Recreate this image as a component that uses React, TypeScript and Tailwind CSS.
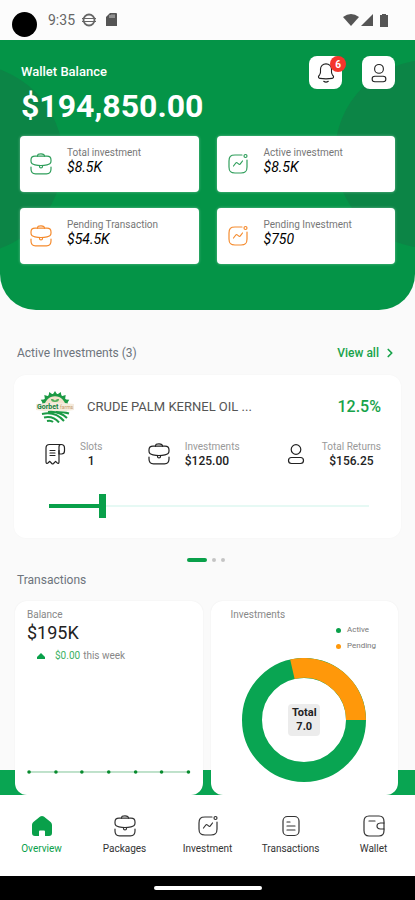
import type { ReactNode } from 'react';
import { ChevronRight } from 'lucide-react';

type IconProps = { className?: string };

function Stroke({ className = 'w-6 h-6', children }: IconProps & { children: ReactNode }) {
  return (
    <svg
      viewBox="0 0 24 24"
      className={`shrink-0 ${className}`}
      fill="none"
      stroke="currentColor"
      strokeWidth="1.2"
      strokeLinecap="round"
      strokeLinejoin="round"
      aria-hidden="true"
    >
      {children}
    </svg>
  );
}

const Briefcase = ({ className }: IconProps) => (
  <Stroke className={className}>
    <path d="M8.500 4.200C8.500 2.400 9.500 1.800 12 1.800s3.500.6 3.500 2.400" />
    <path d="M6 4.200h12c2.500 0 4 1.300 4 3.800v1c0 2.300-1.500 3.400-4 3.900-2 .4-4 .6-6 .6s-4-.2-6-.6C3.500 12.400 2 11.300 2 9V8c0-2.500 1.500-3.800 4-3.800z" />
    <path d="M10.500 14v.4a1.500 1.500 0 0 0 3 0V14" />
    <path d="M2 15v2c0 3.500 1.500 4.800 4.500 4.800h11c3 0 4.500-1.300 4.500-4.800v-2" />
  </Stroke>
);

const Growth = ({ className }: IconProps) => (
  <Stroke className={className}>
    <path d="M16 3H9C4.500 3 3 4.500 3 9v6c0 4.500 1.500 6 6 6h6c4.500 0 6-1.500 6-6V8" />
    <circle cx="19.500" cy="4" r="1.500" />
    <path d="m7.500 14 2.300-3c.4-.5 1-.5 1.500-.1l1.500 1.200c.5.4 1.100.3 1.500-.2l2.200-2.900" />
  </Stroke>
);

const Person = ({ className }: IconProps) => (
  <Stroke className={className}>
    <circle cx="12" cy="7.500" r="4.800" />
    <rect x="4.500" y="15.500" width="15" height="6" rx="3" />
  </Stroke>
);

const Bell = ({ className }: IconProps) => (
  <Stroke className={className}>
    <path d="M12 2c-3.500 0-6 2.700-6 6v3c0 1-.4 2-1 3l-1 1.400c-.6 1.100-.1 2.300 1.300 2.500 4.400.6 9 .6 13.400 0 1.400-.2 1.900-1.400 1.300-2.500L19 14c-.6-1-1-2-1-3V8c0-3.300-2.500-6-6-6z" />
    <path d="M9.500 21c1.500 1.200 3.500 1.200 5 0" />
  </Stroke>
);

const Slip = ({ className }: IconProps) => (
  <Stroke className={className}>
    <path d="M17 8.500V20c0 1.500-1 1.800-1.900.8l-1.500-1.500-2.100 2.200c-.5.500-1.200.5-1.700 0l-2-2.200-1.600 1.500C5.200 21.800 4 21.500 4 20V6c0-2.500 1-3.500 3.500-3.500H19" />
    <path d="M19 2.500c-1.300 0-2 1-2 2.500v7h2.500c2 0 3-1 3-3V6c0-2.200-1.300-3.500-3.500-3.500z" />
    <path d="M8 8.500h5M8 11h5M8 13.500h5" />
  </Stroke>
);

const Document = ({ className }: IconProps) => (
  <Stroke className={className}>
    <rect x="4" y="2.500" width="16" height="19" rx="4.500" />
    <path d="M8 8h3M8 12h8M8 16h8" />
  </Stroke>
);

const Wallet = ({ className }: IconProps) => (
  <Stroke className={className}>
    <path d="M22 9V7.500C22 3.500 20.500 2 17 2H7C3.500 2 2 3.500 2 7.500v9C2 20.500 3.500 22 7 22h10c3.500 0 5-1.500 5-5.500V15" />
    <path d="M22 9h-3.500c-2 .2-3.500 1.400-3.500 3s1.500 2.800 3.500 3H22z" />
    <path d="M7 7h6" />
  </Stroke>
);

const House = ({ className }: IconProps) => (
  <svg viewBox="0 0 24 24" className={className} fill="currentColor" aria-hidden="true">
    <path d="M10.200 2.600 3.700 7.700C2.600 8.600 2 9.800 2 11.200V19a3 3 0 0 0 3 3h4v-4.500a1 1 0 0 1 1-1h4a1 1 0 0 1 1 1V22h4a3 3 0 0 0 3-3v-7.800c0-1.400-.6-2.600-1.700-3.500l-6.500-5.100a3 3 0 0 0-3.600 0z" />
  </svg>
);

function FarmLogo() {
  const rays = [-84, -63, -42, -21, 0, 21, 42, 63, 84];
  return (
    <svg viewBox="0 0 38 32" className="w-[38px] h-8 shrink-0" aria-hidden="true">
      {rays.map((deg) => (
        <path key={deg} d="M15.800 5 19 0l3.200 5z" fill="#1c9a45" transform={`rotate(${deg} 19 16)`} />
      ))}
      <path d="M7 16a12 12 0 0 1 24 0" fill="#f3e2cc" stroke="#1c9a45" strokeWidth="2.500" />
      <path d="M19 11c-3 0-4-1-4-3 2 0 3.500.5 4 2 .5-1.500 2-2 4-2 0 2-1 3-4 3z" fill="#4fae5a" />
      <path d="M0 13q19-3 38 0v6q-19 3-38 0z" fill="#f5ebdd" />
      <text x="1" y="18" fontSize="7" fontWeight="700" fill="#15803d">Gorbet</text>
      <text x="24" y="18" fontSize="5" fill="#c49a6c">farms</text>
      <g fill="none" stroke="#1c9a45" strokeWidth="2">
        <path d="M6 23q13-3 22 7" />
        <path d="M8 26.500q9-2 15 5" />
        <path d="M12 21q12-1 19 6" />
        <path d="M20 21q8 0 13 1.500" />
        <path d="M11 30q4-1 6 1" />
      </g>
    </svg>
  );
}

const stats = [
  { label: 'Total investment', value: '$8.5K', Icon: Briefcase, color: 'text-[#2f9e5b]' },
  { label: 'Active investment', value: '$8.5K', Icon: Growth, color: 'text-[#2f9e5b]' },
  { label: 'Pending Transaction', value: '$54.5K', Icon: Briefcase, color: 'text-[#f58b2e]' },
  { label: 'Pending Investment', value: '$750', Icon: Growth, color: 'text-[#f58b2e]' },
];

const details = [
  { label: 'Slots', value: '1', Icon: Slip, align: 'text-center' },
  { label: 'Investments', value: '$125.00', Icon: Briefcase, align: 'text-left' },
  { label: 'Total Returns', value: '$156.25', Icon: Person, align: 'text-center' },
];

const tabs = [
  { label: 'Overview', Icon: House },
  { label: 'Packages', Icon: Briefcase },
  { label: 'Investment', Icon: Growth },
  { label: 'Transactions', Icon: Document },
  { label: 'Wallet', Icon: Wallet },
];

function StatusBar() {
  return (
    <div className="flex h-10 items-center bg-[#fcfcfc] pl-3 pr-[27px] text-[#666]">
      <span className="mt-2 h-[25px] w-[25px] rounded-full bg-black" />
      <span className="ml-[11px] text-sm">9:35</span>
      <svg viewBox="0 0 14 14" className="ml-[7px] h-3.5 w-3.5" fill="none" stroke="currentColor" aria-hidden="true">
        <circle cx="7" cy="7" r="5.500" strokeWidth="1.800" />
        <path d="M0 5.500h14M0 8.500h14" strokeWidth="1" />
      </svg>
      <svg viewBox="0 0 11 14" className="ml-2.5 h-3.5 w-[11px]" aria-hidden="true">
        <path d="M4 0h6a1 1 0 0 1 1 1v12H0V4z" fill="#555" />
        <path d="M4 2v3M6 1.500V5M8 1.500V5" stroke="#ccc" />
      </svg>
      <svg viewBox="0 0 16 12" className="ml-auto h-3 w-4" fill="#555" aria-hidden="true">
        <path d="M0 3q8-6 16 0L8 12z" />
      </svg>
      <svg viewBox="0 0 12 12" className="ml-0.5 h-3 w-3" fill="#555" aria-hidden="true">
        <path d="M12 0v12H0z" />
      </svg>
      <svg viewBox="0 0 8 13" className="ml-[7px] h-[13px] w-2" fill="#555" aria-hidden="true">
        <path d="M2 0h4v1h2v12H0V1h2z" />
      </svg>
    </div>
  );
}

function Hero() {
  return (
    <header className="relative h-[270px] overflow-hidden rounded-b-[36px] bg-[#049447] px-5 pt-4">
      <div className="absolute -left-[127px] top-6 h-[190px] w-[190px] rounded-full bg-[#0c8546]" />
      <div className="absolute -right-[108px] top-5 h-[188px] w-[188px] rounded-full bg-[#0c8546]" />
      <div className="relative">
        <div className="flex h-20 justify-between">
          <div className="pl-px pt-2 text-white">
            <h1 className="text-[13px] font-medium leading-4">Wallet Balance</h1>
            <p className="mt-2 text-[32px] font-bold leading-9">$194,850.00</p>
          </div>
          <div className="flex gap-5 text-[#222]">
            <button aria-label="Notifications" className="relative flex h-[33px] w-[33px] items-center justify-center rounded-lg bg-white">
              <Bell className="h-[22px] w-[22px]" />
              <span className="absolute -right-1 top-0 flex h-4 w-4 items-center justify-center rounded-full bg-[#f4352c] text-[10px] font-bold text-white">
                6
              </span>
            </button>
            <button aria-label="Profile" className="flex h-[33px] w-[33px] items-center justify-center rounded-lg bg-white">
              <Person className="h-[22px] w-[22px]" />
            </button>
          </div>
        </div>
        <div className="grid grid-cols-2 gap-x-[18px] gap-y-4">
          {stats.map(({ label, value, Icon, color }) => (
            <div key={label} className="flex h-14 rounded-[4px] bg-white pl-[9px] shadow-[0_0_3px_rgba(255,255,255,0.4)]">
              <span className={`flex w-[38px] items-center ${color}`}>
                <Icon />
              </span>
              <div className="pt-2.5">
                <p className="text-[10px] leading-[14px] text-[#777]">{label}</p>
                <p className="text-sm italic leading-[14px] text-black">{value}</p>
              </div>
            </div>
          ))}
        </div>
      </div>
    </header>
  );
}

function InvestmentCard() {
  return (
    <article className="h-[163px] rounded-xl bg-white px-5 pt-4 shadow-[0_0_2px_rgba(0,0,0,0.03)]">
      <div className="flex items-center pl-0.5">
        <FarmLogo />
        <h3 className="ml-[13px] text-[13px] text-[#555]">CRUDE PALM KERNEL OIL ...</h3>
        <span className="ml-auto text-base font-medium text-[#17a34a]">12.5%</span>
      </div>
      <div className="mt-[17px] flex justify-between pl-2">
        {details.map(({ label, value, Icon, align }) => (
          <div key={label} className="flex items-center">
            <Icon className="mr-3.5 h-6 w-6 text-[#222]" />
            <div className={align}>
              <p className="text-[10px] leading-[14px] text-[#999]">{label}</p>
              <p className="text-xs font-medium leading-[14px] text-[#222]">{value}</p>
            </div>
          </div>
        ))}
      </div>
      <div className="mt-[26px] pl-[15px] pr-3">
        <input
          type="range"
          aria-label="Investment progress"
          min={0}
          max={100}
          defaultValue={16}
          className="block h-6 w-full appearance-none bg-[linear-gradient(#09a04a,#09a04a),linear-gradient(#e6f9f4,#e6f9f4)] bg-[length:16%_4px,100%_2px] bg-[position:left_center] bg-no-repeat [&::-webkit-slider-thumb]:h-6 [&::-webkit-slider-thumb]:w-[7px] [&::-webkit-slider-thumb]:appearance-none [&::-webkit-slider-thumb]:bg-[#09a04a]"
        />
      </div>
    </article>
  );
}

function BalanceCard() {
  const points = [2, 29, 55, 82, 109, 135, 162];
  return (
    <article className="flex h-[194px] flex-col rounded-xl bg-white px-3 pt-[7px] shadow-[0_0_2px_rgba(0,0,0,0.06)]">
      <p className="text-[10px] leading-[14px] text-[#888]">Balance</p>
      <p className="text-lg leading-[22px] text-[#222]">$195K</p>
      <p className="mt-1 flex items-center text-[10px] leading-4 text-[#888]">
        <svg viewBox="0 0 8 6" className="ml-2.5 mr-2.5 h-1.5 w-2" fill="#09a04a" aria-hidden="true">
          <path d="M4 0 8 4v2H0V4z" />
        </svg>
        <span className="mr-[3px] text-[#3bb164]">$0.00</span> this week
      </p>
      <svg viewBox="0 0 164 4" className="mb-[21px] mt-auto w-full" aria-hidden="true">
        <path d="M2 2h160" stroke="#7fc497" />
        {points.map((x) => (
          <circle key={x} cx={x} cy="2" r="1.800" fill="#078a2d" />
        ))}
      </svg>
    </article>
  );
}

function InvestmentsCard() {
  return (
    <article className="h-[194px] rounded-xl bg-white pt-[7px] shadow-[0_0_2px_rgba(0,0,0,0.06)]">
      <p className="pl-5 text-[10px] leading-[14px] text-[#888]">Investments</p>
      <ul className="ml-auto w-[62px] text-[8px] leading-4 text-[#777]">
        <li className="flex items-center gap-1.5">
          <span className="h-[5px] w-[5px] rounded-full bg-[#09a04a]" />
          Active
        </li>
        <li className="flex items-center gap-1.5">
          <span className="h-[5px] w-[5px] rounded-full bg-[#ff980a]" />
          Pending
        </li>
      </ul>
      <div className="mt-1 grid place-items-center">
        <svg viewBox="0 0 124 124" className="col-start-1 row-start-1 h-[124px] w-[124px]" fill="none" strokeWidth="20" aria-hidden="true">
          <circle cx="62" cy="62" r="52" stroke="#09a552" />
          <path d="M50.400 11.300A52 52 0 0 1 114 62" stroke="#ff980a" />
        </svg>
        <p className="col-start-1 row-start-1 w-8 rounded-sm bg-[#ececec] py-0.5 text-center text-[11px] font-bold leading-[14px] text-[#222]">
          Total
          <br />
          7.0
        </p>
      </div>
    </article>
  );
}

export default function App() {
  return (
    <div className="flex min-h-screen flex-col bg-[#fafafa] font-['Roboto',sans-serif]">
      <StatusBar />
      <Hero />

      <main className="flex-1">
        <div className="flex h-[65px] items-center justify-between pl-[17px] pr-[18px] pt-5">
          <h2 className="text-xs text-[#6d747c]">Active Investments (3)</h2>
          <a href="#investments" className="flex items-center gap-1 text-xs font-medium text-[#17a34a]">
            View all
            <ChevronRight className="h-3.5 w-3.5" strokeWidth={3} />
          </a>
        </div>
        <div className="px-3.5">
          <InvestmentCard />
        </div>

        <div className="mt-5 flex items-center justify-center gap-[5px] pr-1">
          <span className="h-1 w-5 rounded-full bg-[#09a04a]" />
          <span className="h-1 w-1 rounded-full bg-[#c4c4c4]" />
          <span className="h-1 w-1 rounded-full bg-[#c4c4c4]" />
        </div>

        <h2 className="mt-2 pl-[17px] text-xs leading-5 text-[#6d747c]">Transactions</h2>
        <section className="mt-[11px] grid grid-cols-2 gap-2 bg-[linear-gradient(to_top,#09a552_25px,transparent_25px)] pl-[15px] pr-[17px]">
          <BalanceCard />
          <InvestmentsCard />
        </section>
      </main>

      <nav className="grid h-[81px] grid-cols-5 bg-white pt-[19px]">
        {tabs.map(({ label, Icon }, i) => (
          <a
            key={label}
            href={`#${label.toLowerCase()}`}
            className={`flex flex-col items-center gap-[3px] text-[10px] ${i === 0 ? 'text-[#09a04a]' : 'text-[#333]'}`}
          >
            <Icon className="h-6 w-6" />
            <span className="leading-4">{label}</span>
          </a>
        ))}
      </nav>
      <div className="flex h-6 items-center justify-center bg-black">
        <span className="h-1 w-[108px] rounded-full bg-white" />
      </div>
    </div>
  );
}
